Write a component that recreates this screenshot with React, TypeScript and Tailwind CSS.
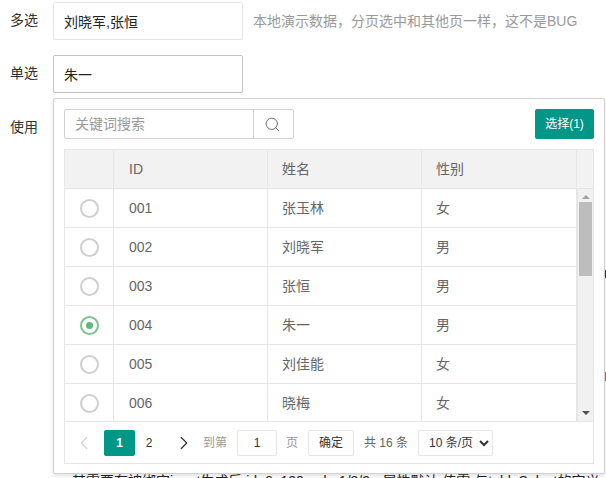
import { ChevronLeft, ChevronRight, Search } from "lucide-react";

const rows = [
  { id: "001", name: "张玉林", sex: "女" },
  { id: "002", name: "刘晓军", sex: "男" },
  { id: "003", name: "张恒", sex: "男" },
  { id: "004", name: "朱一", sex: "男", checked: true },
  { id: "005", name: "刘佳能", sex: "女" },
  { id: "006", name: "晓梅", sex: "女" },
];

const fontStack = "font-['Liberation_Sans','Noto_Sans_CJK_SC',sans-serif]";

function Radio({ checked }: { checked?: boolean }) {
  if (checked) {
    return (
      <span className="flex h-[19px] w-[19px] items-center justify-center rounded-full border-2 border-[#7cc492]">
        <span className="h-[7px] w-[7px] rounded-full bg-[#5fb878]" />
      </span>
    );
  }
  return <span className="block h-[19px] w-[19px] rounded-full border-2 border-[#cfcfcf]" />;
}

function TablePicker() {
  return (
    <div className="absolute left-0 top-[43px] z-10 h-[376px] w-[552px] rounded-[2px] border border-[#d2d2d2] bg-white px-[10px] pt-[10px] shadow-[0_2px_4px_rgba(0,0,0,0.12)]">
      <div className="flex h-[30px] items-stretch justify-between">
        <div className="flex">
          <input
            readOnly
            placeholder="关键词搜索"
            className="h-[30px] w-[190px] rounded-l-[2px] border border-[#d2d2d2] bg-white pl-[10px] text-[14px] outline-none placeholder:text-[#999]"
          />
          <button type="button" className="-ml-px flex h-[30px] w-[41px] items-center justify-center rounded-r-[2px] border border-[#d2d2d2] bg-white pr-[2px] text-[#707070]">
            <Search size={17} strokeWidth={1.4} />
          </button>
        </div>
        <button type="button" className="h-[30px] w-[59px] rounded-[2px] bg-[#009688] text-[12px] text-white">选择(1)</button>
      </div>

      <div className="mt-[10px] w-[530px] border border-[#e6e6e6] text-[14px] text-[#666]">
        <div className="flex h-[39px] border-b border-[#e6e6e6] bg-[#f2f2f2]">
          <div className="w-[49px] border-r border-[#e6e6e6]" />
          <div className="flex w-[154px] items-center border-r border-[#e6e6e6] pl-[15px]">ID</div>
          <div className="flex w-[154px] items-center border-r border-[#e6e6e6] pl-[14px]">姓名</div>
          <div className="flex w-[155px] items-center border-r border-[#e6e6e6] pl-[14px]">性别</div>
          <div className="flex-1" />
        </div>
        <div className="flex h-[232px]">
          <div className="w-[512px] overflow-hidden">
            {rows.map((row) => (
              <div key={row.id} className="flex h-[39px] border-b border-[#e6e6e6]">
                <div className="flex w-[49px] items-center justify-center border-r border-[#e6e6e6]">
                  <Radio checked={row.checked} />
                </div>
                <div className="flex w-[154px] items-center border-r border-[#e6e6e6] pl-[15px]">{row.id}</div>
                <div className="flex w-[154px] items-center border-r border-[#e6e6e6] pl-[14px]">{row.name}</div>
                <div className="flex w-[155px] items-center border-r border-[#e6e6e6] pl-[14px]">{row.sex}</div>
              </div>
            ))}
          </div>
          <div className="flex w-[16px] flex-col items-center border-l border-[#e6e6e6] bg-[#f1f1f1]">
            <span className="mt-[6px] h-0 w-0 border-x-[4px] border-b-[4px] border-x-transparent border-b-[#a3a3a3]" />
            <span className="mt-[3px] h-[74px] w-[13px] bg-[#bdbdbd]" />
            <span className="mt-auto mb-[6px] h-0 w-0 border-x-[4px] border-t-[4px] border-x-transparent border-t-[#505050]" />
          </div>
        </div>
        <div className="flex h-[42px] items-center border-t border-[#e6e6e6] pl-[8px] text-[12px]">
          <ChevronLeft size={22} strokeWidth={1.3} className="text-[#d2d2d2]" />
          <span className="ml-[9px] flex h-[26px] w-[31px] items-center justify-center rounded-[2px] bg-[#009688] font-bold text-white">1</span>
          <span className="flex w-[28px] justify-center text-[#333]">2</span>
          <ChevronRight size={22} strokeWidth={1.3} className="ml-[10px] text-[#333]" />
          <span className="ml-[8px] text-[#999]">到第</span>
          <input readOnly value="1" className="ml-[10px] h-[26px] w-[40px] rounded-[2px] border border-[#e6e6e6] text-center text-[#333] outline-none" />
          <span className="ml-[9px] text-[#999]">页</span>
          <button type="button" className="ml-[10px] h-[26px] w-[46px] rounded-[2px] border border-[#e6e6e6] text-[#333]">确定</button>
          <span className="ml-[10px] text-[#666]">共 16 条</span>
          <select defaultValue="10" className="ml-[10px] h-[26px] w-[75px] rounded-[2px] border border-[#e6e6e6] bg-white pl-[6px] text-[#333] outline-none [appearance:auto]">
            <option value="10">10 条/页</option>
            <option value="20">20 条/页</option>
          </select>
        </div>
      </div>
    </div>
  );
}

export default function App() {
  return (
    <div className={`${fontStack} relative h-[478px] w-[606px] overflow-hidden bg-white pt-[2px] text-[14px] text-[#333]`}>
      <div className="flex h-[38px] items-center">
        <label className="w-[53px] pb-[1px] pl-[10px]">多选</label>
        <input readOnly value="刘晓军,张恒" className="h-[38px] w-[190px] rounded-[2px] border border-[#e6e6e6] pl-[10px] text-[#222] outline-none" />
        <span className="ml-[10px] text-[#999]">本地演示数据，分页选中和其他页一样，这不是BUG</span>
      </div>
      <div className="relative mt-[15px] flex h-[38px] items-center">
        <label className="w-[53px] pb-[1px] pl-[10px]">单选</label>
        <input readOnly value="朱一" className="h-[38px] w-[190px] rounded-[2px] border border-[#c2c2c2] pl-[10px] text-[#222] outline-none" />
        <div className="absolute left-[53px] top-0">
          <TablePicker />
        </div>
      </div>
      <div className="mt-[15px] flex h-[38px] items-center">
        <label className="w-[53px] pl-[10px]">使用</label>
      </div>
      <p className="mt-[325px] whitespace-nowrap pl-[72px] leading-[20px] text-[#222]">
        其需要在被绑定input生成后 id: 6e120ocd - 1/2/3 - 属性默认 值需 与tableSelect的定义
      </p>
      <span className="absolute right-0 top-[270px] h-[8px] w-px bg-[#333]" />
      <span className="absolute right-0 top-[372px] h-[9px] w-px bg-[#b0606a]" />
    </div>
  );
}
